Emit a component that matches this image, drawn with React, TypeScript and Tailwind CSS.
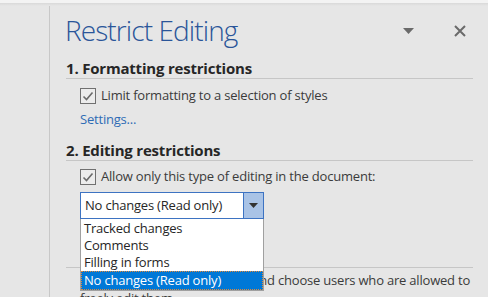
import React from 'react'

const font = { fontFamily: '"Open Sans", "Noto Sans", sans-serif' }

function Check({ label }: { label: string }) {
  return (
    <div className="flex items-center h-[15px] pl-[15px]">
      <span className="w-[16px] h-[16px] border border-[#707070] bg-[#ececec] flex items-center justify-center">
        <svg width="12" height="12" viewBox="0 0 12 12">
          <polyline points="1.5,6.5 4.5,9.5 10.5,2.5" fill="none" stroke="#6b6b6b" strokeWidth="1.6" />
        </svg>
      </span>
      <span className="ml-[5px] text-[13px] text-[#3b3b3b] leading-none whitespace-nowrap tracking-[-0.2px]">{label}</span>
    </div>
  )
}

function SectionHeader({ text }: { text: string }) {
  return (
    <div className="border-b border-[#c6c6c6] h-[17px] flex items-end">
      <span className="text-[15px] font-bold text-[#262626] leading-none whitespace-nowrap tracking-[-0.2px] pb-[2px]">{text}</span>
    </div>
  )
}

export default function App() {
  const items = ['Tracked changes', 'Comments', 'Filling in forms', 'No changes (Read only)']

  return (
    <div className="w-[488px] h-[297px] overflow-hidden bg-[#e6e6e6] relative" style={font}>
      <div className="h-[3px] bg-[#f3f3f3]" />
      <div className="h-[3px] bg-gradient-to-b from-[#d9d9d9] to-[#e6e6e6]" />
      <div className="flex h-full">
        <div className="w-[50px] border-r border-[#c8c8c8] shrink-0" />
        <div className="flex-1 pl-[15px] pr-[15px] relative">
          {/* title row */}
          <div className="flex items-center h-[44px] relative">
            <h1 className="text-[28px] font-light text-[#2a5599] leading-none tracking-[-0.9px] whitespace-nowrap mt-[3px]">Restrict Editing</h1>
            <div className="ml-auto flex items-center gap-[40px] pr-[7px] mt-[6px]">
              <svg width="11" height="6" viewBox="0 0 11 6">
                <polygon points="0,0 11,0 5.5,6" fill="#6a6a6a" />
              </svg>
              <svg width="12" height="12" viewBox="0 0 12 12">
                <path d="M1 1 L11 11 M11 1 L1 11" stroke="#6a6a6a" strokeWidth="2" />
              </svg>
            </div>
          </div>

          <div className="pl-[1px] mt-[12px]">
            <SectionHeader text="1. Formatting restrictions" />
          </div>
          <div className="mt-[9px]">
            <Check label="Limit formatting to a selection of styles" />
          </div>
          <div className="pl-[15px] mt-[10px] text-[13px] text-[#2e6cb5] leading-none tracking-[-0.2px]">Settings...</div>

          <div className="pl-[1px] mt-[18px]">
            <SectionHeader text="2. Editing restrictions" />
          </div>
          <div className="mt-[8px]">
            <Check label="Allow only this type of editing in the document:" />
          </div>

          {/* combobox */}
          <div className="ml-[15px] mt-[8px] w-[184px] relative">
            <div className="h-[27px] border border-[#3d73c2] bg-white flex">
              <span className="flex-1 text-[13px] text-[#262626] leading-none flex items-center pl-[4px] whitespace-nowrap tracking-[-0.2px]">No changes (Read only)</span>
              <span className="w-[20px] bg-[#a9c3e6] border-l border-[#3d73c2] flex items-center justify-center">
                <svg width="9" height="5" viewBox="0 0 9 5">
                  <polygon points="0,0 9,0 4.5,5" fill="#333333" />
                </svg>
              </span>
            </div>
            <ul className="absolute left-0 top-[27px] w-[184px] z-10 bg-white border border-[#a0a0a0] border-t-0 pt-[1px]">
              {items.map((it, i) => (
                <li
                  key={it}
                  className={
                    i === 3
                      ? 'h-[19px] pl-[3px] text-[13px] leading-none flex items-center whitespace-nowrap tracking-[-0.2px] bg-[#0078d7] text-white outline-1 outline-dotted outline-[#e0893a] -outline-offset-1'
                      : 'h-[17px] pl-[3px] text-[13px] leading-none flex items-center whitespace-nowrap tracking-[-0.2px] text-[#262626]'
                  }
                >
                  {it}
                </li>
              ))}
            </ul>
          </div>

          {/* exceptions, mostly hidden under the list */}
          <div className="pl-[15px] mt-[14px] h-[16px] text-[13px] text-[#3b3b3b] leading-none">Exceptions (optional)</div>
          <div className="border-t border-[#c6c6c6] ml-[1px] mt-[18px]" />
          <p className="pl-[15px] mt-[3px] text-[13px] text-[#3b3b3b] leading-[18px] tracking-[-0.2px]">
            Select parts of the document and choose users who are allowed to freely edit them.
          </p>
        </div>
      </div>
    </div>
  )
}
